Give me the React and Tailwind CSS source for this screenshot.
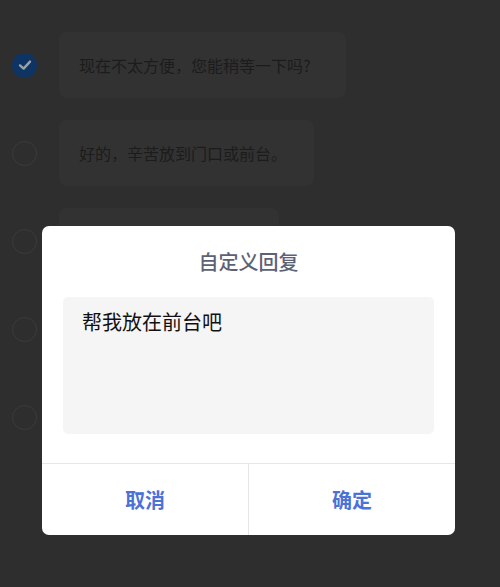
import React from "react";

const rows = [
  { text: "现在不太方便，您能稍等一下吗?", checked: true, w: "w-[287px]" },
  { text: "好的，辛苦放到门口或前台。", checked: false, w: "w-[255px]" },
  { text: "", checked: false, w: "w-[220px]" },
  { text: "", checked: false, w: "w-[240px]" },
  { text: "", checked: false, w: "w-[230px]" },
];

export default function App() {
  return (
    <div
      className="relative w-[500px] h-[587px] overflow-hidden bg-[#2e2e2e]"
      style={{ fontFamily: '"Noto Sans CJK SC", "Noto Sans", sans-serif' }}
    >
      <div className="flex flex-col gap-[22px] pt-[32px]">
        {rows.map((r, i) => (
          <div key={i} className="flex items-center pl-[12px] gap-[22px]">
            {r.checked ? (
              <div className="w-[25px] h-[25px] rounded-full bg-[#0d3463] flex items-center justify-center">
                <svg width="16" height="16" viewBox="0 0 16 16">
                  <path d="M3 8.4 L6.6 11.6 L13 4.6" fill="none" stroke="#9aa1ab" strokeWidth="2.4" strokeLinecap="round" strokeLinejoin="round" />
                </svg>
              </div>
            ) : (
              <div className="w-[25px] h-[25px] rounded-full border-[1.5px] border-[#3b3b3b]" />
            )}
            <div className={`${r.w} h-[66px] flex items-center rounded-[8px] bg-[#323232] pl-[20px] text-[16px] text-[#1c1c1c]`}>
              {r.text}
            </div>
          </div>
        ))}
      </div>

      <div className="absolute left-[42px] top-[226px] w-[413px] h-[309px] bg-white rounded-[7px] flex flex-col">
        <div className="h-[71px] flex items-center justify-center text-[20px] font-medium text-[#5b6276]">
          自定义回复
        </div>
        <div className="mx-[21px] h-[137px] bg-[#f5f5f5] rounded-[5px] pl-[19px] pt-[11px] text-[20px] leading-[28px] text-[#111]">
          帮我放在前台吧
        </div>
        <div className="mt-[29px] flex-1 flex border-t border-[#e6e6e6]">
          <div className="flex-1 flex items-center justify-center text-[20px] font-semibold text-[#4b72d6] border-r border-[#e6e6e6]">
            取消
          </div>
          <div className="flex-1 flex items-center justify-center text-[20px] font-semibold text-[#4b72d6]">
            确定
          </div>
        </div>
      </div>
    </div>
  );
}
